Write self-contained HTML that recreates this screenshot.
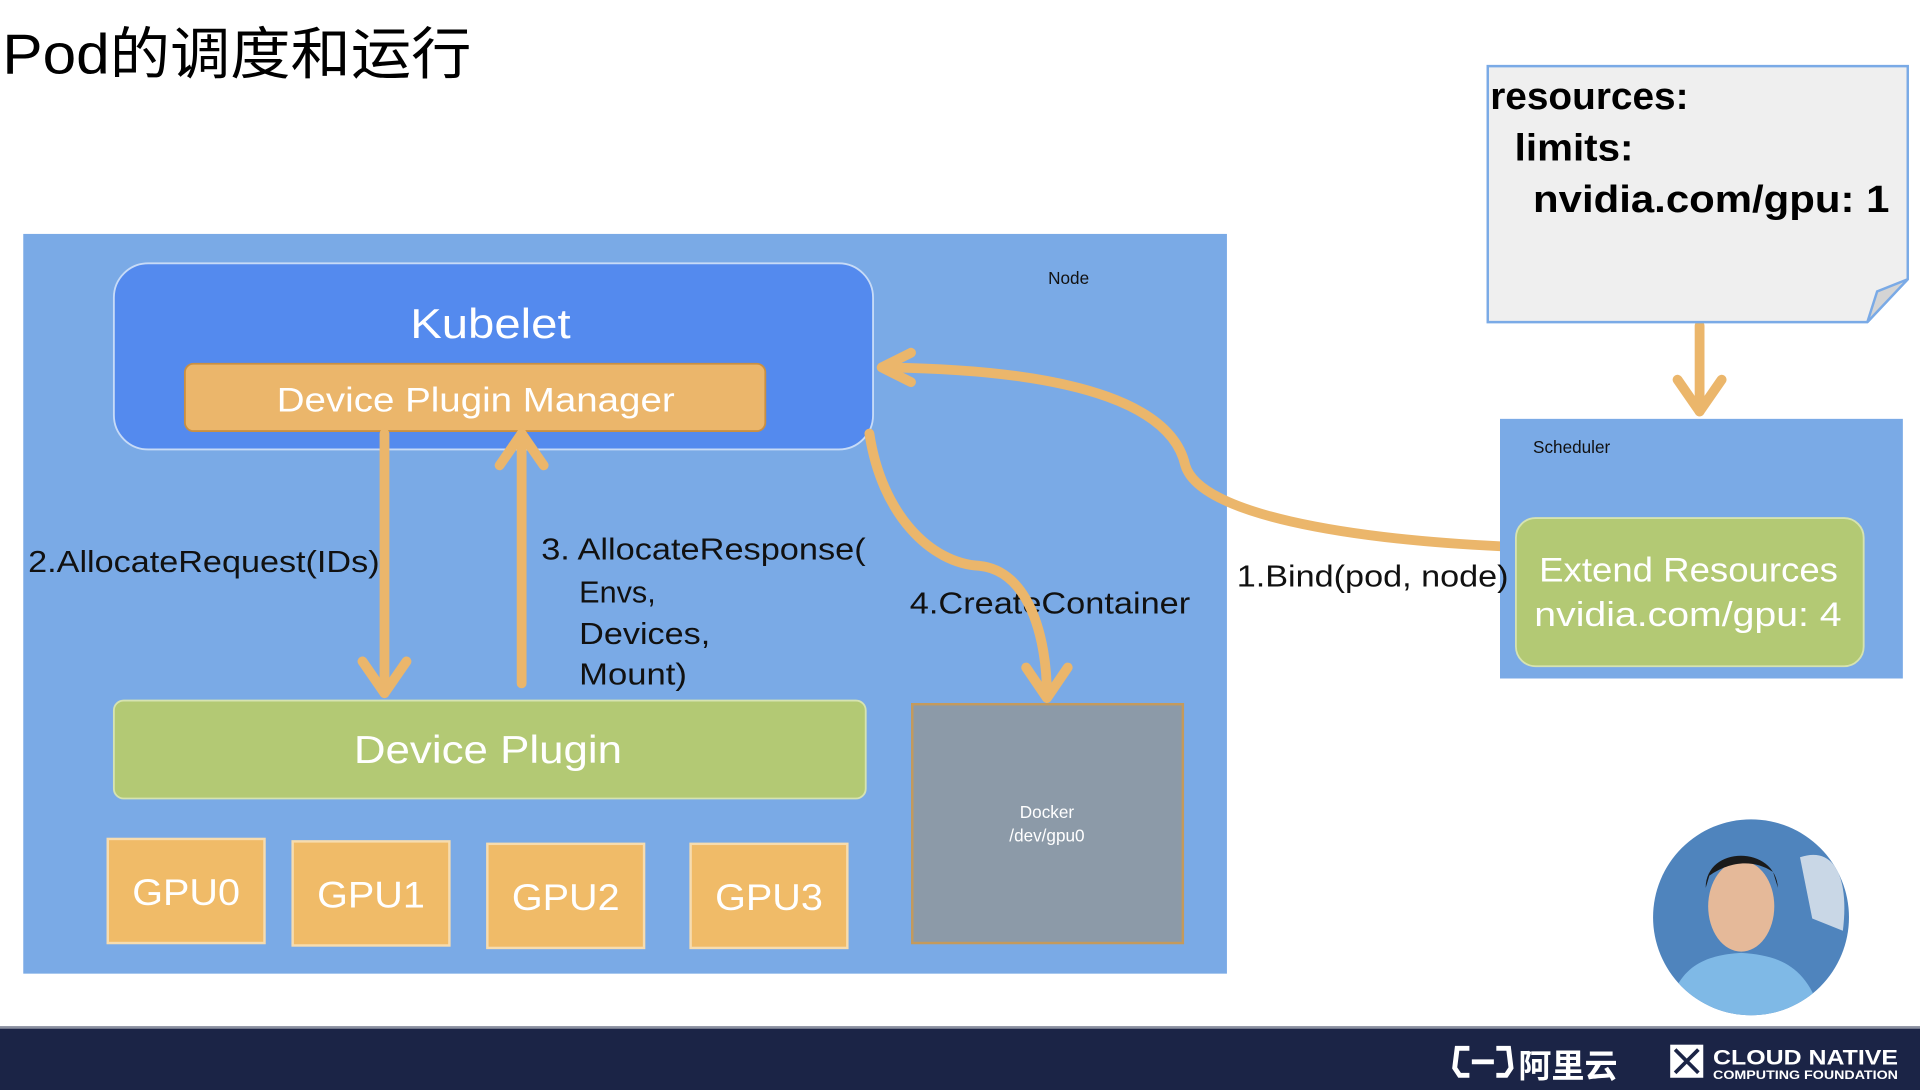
<!DOCTYPE html>
<html><head><meta charset="utf-8"><style>
html,body{margin:0;padding:0;background:#fff;width:1920px;height:1090px;overflow:hidden}
svg{display:block}
text{font-family:"Liberation Sans","Noto Sans CJK SC",sans-serif}
</style></head><body>
<svg width="1920" height="1090" viewBox="0 0 1568 890" preserveAspectRatio="none" xmlns="http://www.w3.org/2000/svg">
<rect width="1568" height="890" fill="#fff"/>
<text x="2" y="60" font-size="46" fill="#000" textLength="383" lengthAdjust="spacingAndGlyphs">Pod的调度和运行</text>

<!-- Node -->
<rect x="19" y="191" width="983" height="604" fill="#7aaae6"/>
<text x="856" y="232" font-size="14" fill="#111">Node</text>

<!-- Kubelet -->
<rect x="93" y="215" width="620" height="152" rx="28" fill="#548aee" stroke="#c7dbf7" stroke-width="1.5"/>
<text x="335" y="276" font-size="34" fill="#fff" textLength="131" lengthAdjust="spacingAndGlyphs" font-family="DejaVu Sans,sans-serif">Kubelet</text>
<rect x="151" y="297" width="474" height="55" rx="7" fill="#ebb66b" stroke="#c98f42" stroke-width="1.5"/>
<text x="226" y="336" font-size="28" fill="#fff" textLength="325" lengthAdjust="spacingAndGlyphs">Device Plugin Manager</text>

<!-- Device plugin -->
<rect x="93" y="572" width="614" height="80" rx="8" fill="#b3c974" stroke="#d6e3b0" stroke-width="1.5"/>
<text x="289" y="623" font-size="32" fill="#fff" textLength="219" lengthAdjust="spacingAndGlyphs" font-family="DejaVu Sans,sans-serif">Device Plugin</text>

<!-- GPUs -->
<g font-size="30" fill="#fff">
<rect x="88" y="685" width="128" height="85" fill="#f0bb68" stroke="#f7dcae" stroke-width="2"/><text x="108" y="739" textLength="88" lengthAdjust="spacingAndGlyphs">GPU0</text>
<rect x="239" y="687" width="128" height="85" fill="#f0bb68" stroke="#f7dcae" stroke-width="2"/><text x="259" y="741" textLength="88" lengthAdjust="spacingAndGlyphs">GPU1</text>
<rect x="398" y="689" width="128" height="85" fill="#f0bb68" stroke="#f7dcae" stroke-width="2"/><text x="418" y="743" textLength="88" lengthAdjust="spacingAndGlyphs">GPU2</text>
<rect x="564" y="689" width="128" height="85" fill="#f0bb68" stroke="#f7dcae" stroke-width="2"/><text x="584" y="743" textLength="88" lengthAdjust="spacingAndGlyphs">GPU3</text>
</g>

<!-- Docker -->
<rect x="745" y="575" width="221" height="195" fill="#8c9aa8" stroke="#c49a5c" stroke-width="2"/>
<text x="855" y="668" font-size="14" fill="#fff" text-anchor="middle">Docker</text>
<text x="855" y="687" font-size="14" fill="#fff" text-anchor="middle">/dev/gpu0</text>

<!-- Labels -->
<g font-size="25" fill="#111">
<text x="23" y="467" textLength="287" lengthAdjust="spacingAndGlyphs">2.AllocateRequest(IDs)</text>
<text x="442" y="457" textLength="265" lengthAdjust="spacingAndGlyphs">3. AllocateResponse(</text>
<text x="473" y="492">Envs,</text>
<text x="473" y="526" textLength="107" lengthAdjust="spacingAndGlyphs">Devices,</text>
<text x="473" y="559" textLength="88" lengthAdjust="spacingAndGlyphs">Mount)</text>
<text x="743" y="501" textLength="229" lengthAdjust="spacingAndGlyphs">4.CreateContainer</text>
</g>

<!-- Arrows -->
<g stroke="#ebb66b" stroke-width="8" fill="none" stroke-linecap="round" stroke-linejoin="round">
<path d="M314 354 L314 566"/><path d="M296 540 L314 566 L332 540"/>
<path d="M426 558 L426 354"/><path d="M408 380 L426 354 L444 380"/>
<path d="M1225 446 C1100 440 980 420 968 380 C958 335 890 302 722 300"/><path d="M744 288 L720 300 L744 312"/>
<path d="M710 354 C720 420 760 460 800 462 C840 466 855 520 855 568"/><path d="M838 545 L855 570 L872 545"/>
<path d="M1388 266 L1388 336"/><path d="M1370 310 L1388 336 L1406 310"/>
</g>

<!-- YAML note -->
<path d="M1215 54 L1558 54 L1558 228 L1525 263 L1215 263 Z" fill="#efefef" stroke="#7aaae6" stroke-width="2"/>
<path d="M1525 263 L1533 238 L1558 228 Z" fill="#d4d4d4" stroke="#7aaae6" stroke-width="2"/>
<g font-size="31" font-weight="bold" fill="#000" font-family="DejaVu Sans,sans-serif">
<text x="1217" y="89" textLength="162" lengthAdjust="spacingAndGlyphs">resources:</text>
<text x="1237" y="131" textLength="97" lengthAdjust="spacingAndGlyphs">limits:</text>
<text x="1252" y="173" textLength="291" lengthAdjust="spacingAndGlyphs">nvidia.com/gpu: 1</text>
</g>

<!-- Scheduler -->
<rect x="1225" y="342" width="329" height="212" fill="#7aaae6"/>
<text x="1252" y="370" font-size="14" fill="#111">Scheduler</text>
<rect x="1238" y="423" width="284" height="121" rx="16" fill="#b3c974" stroke="#d6e3b0" stroke-width="1.5"/>
<g font-size="28" fill="#fff" font-family="DejaVu Sans,sans-serif">
<text x="1257" y="475" textLength="244" lengthAdjust="spacingAndGlyphs">Extend Resources</text>
<text x="1253" y="511" textLength="251" lengthAdjust="spacingAndGlyphs">nvidia.com/gpu: 4</text>
</g>
<text x="1010" y="479" font-size="25" fill="#111" textLength="222" lengthAdjust="spacingAndGlyphs">1.Bind(pod, node)</text>

<!-- Presenter circle -->
<defs><clipPath id="c"><circle cx="1430" cy="749" r="80"/></clipPath></defs>
<circle cx="1430" cy="749" r="81" fill="#fff"/>
<g clip-path="url(#c)">
<rect x="1340" y="660" width="180" height="180" fill="#4f84bd"/>
<path d="M1470 700 C1500 690 1510 720 1505 760 L1480 750 Z" fill="#c9d7e6"/>
<ellipse cx="1422" cy="740" rx="27" ry="37" fill="#e5b999"/>
<path d="M1393 725 C1393 690 1450 690 1452 725 L1448 712 C1430 700 1410 705 1396 715 Z" fill="#1a1a1a"/>
<path d="M1360 840 C1365 790 1390 780 1422 778 C1455 780 1480 790 1490 840 Z" fill="#7fb9e6"/>
</g>

<!-- Bottom bar -->
<rect x="0" y="838" width="1568" height="52" fill="#1b2446"/>
<rect x="0" y="838" width="1568" height="2" fill="#8a90a0"/>
<g fill="none" stroke="#fff" stroke-width="4">
<path d="M1200 856 L1190 856 L1188 872 L1192 878 L1200 878"/>
<path d="M1222 856 L1232 856 L1234 872 L1230 878 L1222 878"/>
<path d="M1202 867 L1220 867"/>
</g>
<text x="1240" y="880" font-size="27" fill="#fff" font-family="Noto Sans CJK SC,sans-serif" font-weight="bold">阿里云</text>
<rect x="1364" y="853" width="27" height="27" fill="#fff"/>
<path d="M1368 857 L1387 876 M1387 857 L1368 876" stroke="#1b2446" stroke-width="3"/>
<text x="1399" y="869" font-size="17" font-weight="bold" fill="#fff" textLength="151" lengthAdjust="spacingAndGlyphs">CLOUD NATIVE</text>
<text x="1399" y="881" font-size="9.5" font-weight="bold" fill="#fff" textLength="151" lengthAdjust="spacingAndGlyphs">COMPUTING FOUNDATION</text>
</svg>
</body></html>
